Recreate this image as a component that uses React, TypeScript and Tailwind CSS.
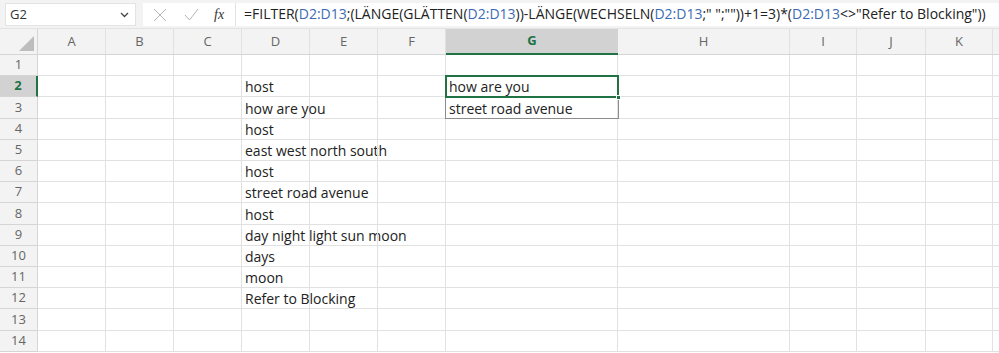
import React from "react";

const cols = [
  { name: "A", w: 68 },
  { name: "B", w: 68 },
  { name: "C", w: 68 },
  { name: "D", w: 68 },
  { name: "E", w: 68 },
  { name: "F", w: 68 },
  { name: "G", w: 172 },
  { name: "H", w: 172 },
  { name: "I", w: 67 },
  { name: "J", w: 69 },
  { name: "K", w: 67 },
  { name: "", w: 68 },
];

const rowHeights = [21, 21, 22, 21, 21, 21, 21, 22, 21, 21, 21, 21, 22, 21];

const dCol: Record<number, string> = {
  2: "host",
  3: "how are you",
  4: "host",
  5: "east west north south",
  6: "host",
  7: "street road avenue",
  8: "host",
  9: "day night light sun moon",
  10: "days",
  11: "moon",
  12: "Refer to Blocking",
};

const gCol: Record<number, string> = {
  2: "how are you",
  3: "street road avenue",
};

function Ref({ children }: { children: React.ReactNode }) {
  return <span className="text-[#3b6bb5]">{children}</span>;
}

export default function App() {
  return (
    <div
      className="relative w-[999px] h-[353px] overflow-hidden bg-white text-[#222]"
      style={{ fontFamily: '"Open Sans", "Noto Sans", sans-serif' }}
    >
      {/* formula bar */}
      <div className="h-[29px] bg-[#f3f3f3] flex items-start pt-[3px] border-b border-[#e3e3e3]">
        <div className="ml-[5px] w-[131px] h-[23px] bg-white border border-[#e3e3e3] flex items-center justify-between pl-[4px] pr-[6px] text-[13px] text-[#333]">
          <span>G2</span>
          <svg width="9" height="6" viewBox="0 0 9 6">
            <path d="M1 1l3.5 3.5L8 1" fill="none" stroke="#444" strokeWidth="1.3" />
          </svg>
        </div>
        <div className="ml-[7px] flex-1 h-[23px] bg-white flex items-center">
          <div className="w-[93px] h-full flex items-center border-r border-[#e3e3e3]">
            <svg className="ml-[10px]" width="14" height="14" viewBox="0 0 14 14">
              <path d="M1 1l12 12M13 1L1 13" stroke="#b5b5b5" strokeWidth="1" />
            </svg>
            <svg className="ml-[17px]" width="15" height="13" viewBox="0 0 15 13">
              <path d="M1 7l4.5 5L14 1" fill="none" stroke="#b5b5b5" strokeWidth="1" />
            </svg>
            <span
              className="ml-[15px] text-[14px] italic text-[#333]"
              style={{ fontFamily: '"Liberation Serif", serif' }}
            >
              fx
            </span>
          </div>
          <div className="pl-[8px] -mt-[2px] text-[14px] whitespace-nowrap text-[#222]">
            =FILTER(<Ref>D2:D13</Ref>;(LÄNGE(GLÄTTEN(<Ref>D2:D13</Ref>))-LÄNGE(WECHSELN(<Ref>D2:D13</Ref>;" ";""))+1=3)*(<Ref>D2:D13</Ref>&lt;&gt;"Refer to Blocking"))
          </div>
        </div>
      </div>

      {/* grid */}
      <div className="flex flex-col">
        <div className="flex h-[26px] bg-[#f3f3f3] border-b border-[#d5d5d5]">
          <div className="w-[38px] shrink-0 relative border-r border-[#d5d5d5]">
            <div className="absolute right-[3px] bottom-[3px] w-0 h-0 border-l-[15px] border-l-transparent border-b-[15px] border-b-[#bdbdbd]" />
          </div>
          {cols.map((c, idx) =>
            c.name === "G" ? (
              <div
                key={idx}
                style={{ width: c.w }}
                className="shrink-0 flex items-center justify-center bg-[#d2d2d2] border-b-2 border-[#217346] -mb-px text-[13px] font-bold text-[#217346]"
              >
                {c.name}
              </div>
            ) : (
              <div
                key={idx}
                style={{ width: c.w }}
                className="shrink-0 flex items-center justify-center border-r border-[#e1e1e1] text-[13px] text-[#666]"
              >
                {c.name}
              </div>
            )
          )}
        </div>
        {rowHeights.map((h, i) => {
          const r = i + 1;
          const sel = r === 2;
          return (
            <div key={r} className="flex" style={{ height: h }}>
              <div
                className={
                  sel
                    ? "w-[38px] shrink-0 flex items-center justify-center bg-[#d2d2d2] border-r-2 border-[#217346] border-b border-b-[#d5d5d5] text-[13px] font-bold text-[#217346]"
                    : "w-[38px] shrink-0 flex items-center justify-center bg-[#f3f3f3] border-r border-b border-[#d5d5d5] text-[13px] text-[#666]"
                }
              >
                {r}
              </div>
              {cols.map((c, idx) => {
                const txt = c.name === "D" ? dCol[r] : c.name === "G" ? gCol[r] : undefined;
                return (
                  <div
                    key={idx}
                    style={{ width: c.w }}
                    className="shrink-0 border-r border-b border-[#e1e1e1] flex items-end pl-[3px] leading-[19px] text-[14px] whitespace-nowrap overflow-visible"
                  >
                    {txt}
                  </div>
                );
              })}
            </div>
          );
        })}
      </div>

      {/* selection over G2:G3 */}
      <div className="absolute left-[445px] top-[75px] w-[174px] h-[44px] border border-[#8c8c8c] pointer-events-none" />
      <div className="absolute left-[445px] top-[75px] w-[174px] h-[23px] border-2 border-[#217346] pointer-events-none" />
      <div className="absolute left-[616px] top-[95px] w-[5px] h-[5px] bg-[#217346] border border-white pointer-events-none" />
    </div>
  );
}
